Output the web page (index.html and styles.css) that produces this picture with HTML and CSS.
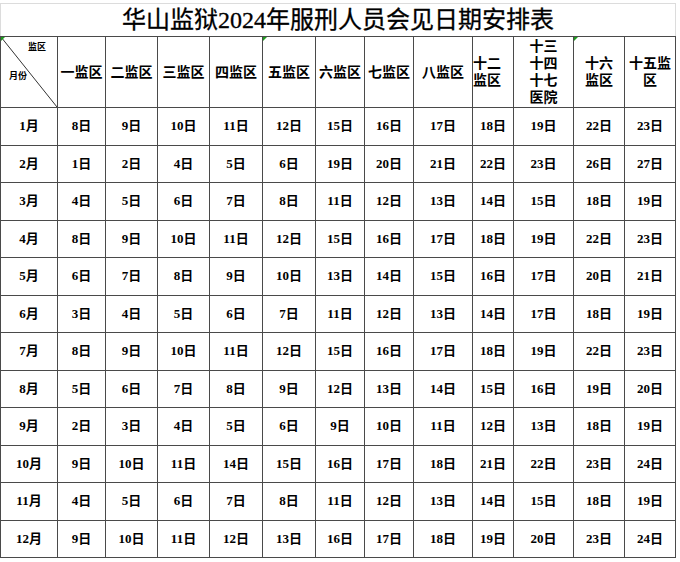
FILE: index.html
```html
<!DOCTYPE html>
<html lang="zh-CN">
<head>
<meta charset="utf-8">
<title>华山监狱2024年服刑人员会见日期安排表</title>
<link rel="stylesheet" href="styles.css">
</head>
<body>
<table class="sheet">
  <colgroup>
    <col class="c-month"><col class="c48"><col class="c52"><col class="c52"><col class="c53"><col class="c53"><col class="c49"><col class="c49"><col class="c59"><col class="c41"><col class="c60"><col class="c51"><col class="c51">
  </colgroup>
  <thead>
    <tr class="title-row"><th colspan="13" class="title">华山监狱2024年服刑人员会见日期安排表</th></tr>
    <tr class="head-row">
      <th class="corner">
        <svg class="diag" viewBox="0 0 100 100" preserveAspectRatio="none"><line x1="0" y1="0" x2="100" y2="100" stroke="#333" stroke-width="1" vector-effect="non-scaling-stroke"/></svg>
        <span class="corner-top">监区</span>
        <span class="corner-bottom">月份</span>
        <span class="mark"></span>
      </th>
      <th>一监区</th><th>二监区</th><th>三监区</th><th>四监区</th>
      <th class="marked">五监区<span class="mark"></span></th>
      <th>六监区</th><th>七监区</th><th>八监区</th>
      <th class="left">十二<br>监区</th>
      <th>十三<br>十四<br>十七<br>医院</th>
      <th class="marked">十六<br>监区<span class="mark"></span></th>
      <th>十五监<br>区</th>
    </tr>
  </thead>
  <tbody>
    <tr><td>1月</td><td>8日</td><td>9日</td><td>10日</td><td>11日</td><td>12日</td><td>15日</td><td>16日</td><td>17日</td><td>18日</td><td>19日</td><td>22日</td><td>23日</td></tr>
    <tr><td>2月</td><td>1日</td><td>2日</td><td>4日</td><td>5日</td><td>6日</td><td>19日</td><td>20日</td><td>21日</td><td>22日</td><td>23日</td><td>26日</td><td>27日</td></tr>
    <tr><td>3月</td><td>4日</td><td>5日</td><td>6日</td><td>7日</td><td>8日</td><td>11日</td><td>12日</td><td>13日</td><td>14日</td><td>15日</td><td>18日</td><td>19日</td></tr>
    <tr><td>4月</td><td>8日</td><td>9日</td><td>10日</td><td>11日</td><td>12日</td><td>15日</td><td>16日</td><td>17日</td><td>18日</td><td>19日</td><td>22日</td><td>23日</td></tr>
    <tr><td>5月</td><td>6日</td><td>7日</td><td>8日</td><td>9日</td><td>10日</td><td>13日</td><td>14日</td><td>15日</td><td>16日</td><td>17日</td><td>20日</td><td>21日</td></tr>
    <tr><td>6月</td><td>3日</td><td>4日</td><td>5日</td><td>6日</td><td>7日</td><td>11日</td><td>12日</td><td>13日</td><td>14日</td><td>17日</td><td>18日</td><td>19日</td></tr>
    <tr><td>7月</td><td>8日</td><td>9日</td><td>10日</td><td>11日</td><td>12日</td><td>15日</td><td>16日</td><td>17日</td><td>18日</td><td>19日</td><td>22日</td><td>23日</td></tr>
    <tr><td>8月</td><td>5日</td><td>6日</td><td>7日</td><td>8日</td><td>9日</td><td>12日</td><td>13日</td><td>14日</td><td>15日</td><td>16日</td><td>19日</td><td>20日</td></tr>
    <tr><td>9月</td><td>2日</td><td>3日</td><td>4日</td><td>5日</td><td>6日</td><td>9日</td><td>10日</td><td>11日</td><td>12日</td><td>13日</td><td>18日</td><td>19日</td></tr>
    <tr><td>10月</td><td>9日</td><td>10日</td><td>11日</td><td>14日</td><td>15日</td><td>16日</td><td>17日</td><td>18日</td><td>21日</td><td>22日</td><td>23日</td><td>24日</td></tr>
    <tr><td>11月</td><td>4日</td><td>5日</td><td>6日</td><td>7日</td><td>8日</td><td>11日</td><td>12日</td><td>13日</td><td>14日</td><td>15日</td><td>18日</td><td>19日</td></tr>
    <tr><td>12月</td><td>9日</td><td>10日</td><td>11日</td><td>12日</td><td>13日</td><td>16日</td><td>17日</td><td>18日</td><td>19日</td><td>20日</td><td>23日</td><td>24日</td></tr>
  </tbody>
</table>
</body>
</html>
```

FILE: styles.css
```css
html, body {
  margin: 0;
  padding: 0;
  background: #fff;
}
body {
  padding-top: 3px;
  font-family: "Liberation Serif", "Noto Sans CJK SC", serif;
  color: #000;
}
.sheet {
  border-collapse: collapse;
  table-layout: fixed;
  width: 676px;
}
.c-month { width: 57px; }
.c48 { width: 48px; }
.c52 { width: 52px; }
.c53 { width: 53px; }
.c49 { width: 49px; }
.c59 { width: 59px; }
.c41 { width: 41px; }
.c60 { width: 60px; }
.c51 { width: 51px; }

.sheet th, .sheet td {
  border: 1px solid #4a4a4a;
  padding: 0;
  text-align: center;
  vertical-align: middle;
  font-weight: bold;
}
.title-row { height: 33px; }
.sheet th.title {
  border-top: 1px solid #dcdcdc;
  border-left: 1px solid #dcdcdc;
  border-right: 1px solid #dcdcdc;
  font-size: 24px;
  font-weight: normal;
  -webkit-text-stroke: 0.3px #000;
  letter-spacing: 0;
  line-height: 32px;
}
.head-row { height: 71px; }
.head-row th {
  font-size: 14px;
  line-height: 17px;
  position: relative;
}
.head-row th.left { text-align: left; }
.corner { position: relative; }
.diag {
  position: absolute;
  left: 0;
  top: 0;
  width: 100%;
  height: 100%;
}
.corner-top {
  position: absolute;
  top: 5px;
  right: 11px;
  font-size: 9px;
  line-height: 10px;
}
.corner-bottom {
  position: absolute;
  top: 34px;
  left: 8px;
  font-size: 9px;
  line-height: 10px;
}
.mark {
  position: absolute;
  top: 0;
  left: 0;
  width: 0;
  height: 0;
  border-top: 4px solid #1f9a1f;
  border-right: 4px solid transparent;
}
tbody tr { height: 37.5px; }
tbody td {
  font-size: 13px;
  line-height: 16px;
}
```
